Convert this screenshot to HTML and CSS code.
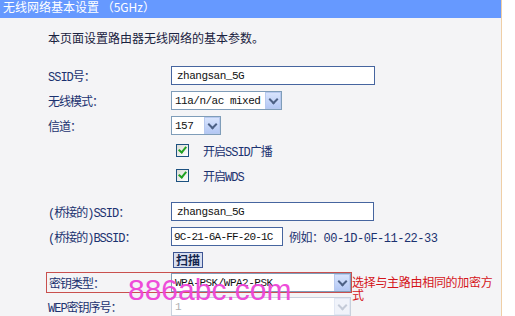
FILE: index.html
```html
<!DOCTYPE html>
<html lang="zh-CN">
<head>
  <meta charset="UTF-8">
  <title>无线网络基本设置</title>
  <link rel="stylesheet" href="styles.css">
</head>
<body>
  <div class="panel">
    <div class="title">无线网络基本设置 （5GHz）</div>
    <p class="intro">本页面设置路由器无线网络的基本参数。</p>

    <div class="form">
      <div class="row">
        <label>SSID号：</label>
        <input class="field wide" type="text" value="zhangsan_5G">
      </div>
      <div class="row">
        <label>无线模式：</label>
        <div class="select mode"><span>11a/n/ac mixed</span><i class="arrow"></i></div>
      </div>
      <div class="row">
        <label>信道：</label>
        <div class="select chan"><span>157</span><i class="arrow"></i></div>
      </div>
      <div class="row">
        <label></label>
        <span class="check"></span><span class="check-text">开启SSID广播</span>
      </div>
      <div class="row">
        <label></label>
        <span class="check"></span><span class="check-text">开启WDS</span>
      </div>

      <div class="row gap">
        <label>(桥接的)SSID：</label>
        <input class="field wide2" type="text" value="zhangsan_5G">
      </div>
      <div class="row">
        <label>(桥接的)BSSID：</label>
        <input class="field mac" type="text" value="9C-21-6A-FF-20-1C">
        <span class="hint">例如：00-1D-0F-11-22-33</span>
      </div>
      <div class="row short">
        <label></label>
        <button class="scan">扫描</button>
      </div>
      <div class="row key">
        <div class="mark">
          <label>密钥类型：</label>
          <div class="select long"><span>WPA-PSK/WPA2-PSK</span><i class="arrow"></i></div>
        </div>
        <div class="note">选择与主路由相同的加密方式</div>
      </div>
      <div class="row">
        <label>WEP密钥序号：</label>
        <div class="select long off"><span>1</span><i class="arrow"></i></div>
      </div>
    </div>

    <div class="watermark">886abc.com</div>
  </div>
</body>
</html>
```

FILE: styles.css
```css
* {
  margin: 0;
  padding: 0;
  box-sizing: border-box;
}
body {
  width: 515px;
  height: 316px;
  overflow: hidden;
  background: #fff;
  font-family: "Liberation Mono", "Noto Sans CJK SC", monospace;
  font-size: 12px;
}
.panel {
  position: relative;
  width: 502px;
  height: 316px;
  background: #f4f4f6;
  border-right: 1px solid #efcfa6;
}
.title {
  height: 18px;
  line-height: 14px;
  padding-left: 3px;
  background: #6699ff;
  color: #fff;
  font-family: "Noto Sans CJK SC", sans-serif;
  overflow: hidden;
}
.intro {
  margin: 12px 0 0 48px;
  line-height: 16px;
  color: #1a2240;
  font-family: "Noto Sans CJK SC", sans-serif;
}
.form {
  margin-top: 17px;
}
.row {
  display: flex;
  align-items: center;
  height: 25px;
  padding-left: 48px;
}
.row.gap {
  margin-top: 11px;
}
.row.short {
  height: 21px;
}
.row label {
  width: 123px;
  flex-shrink: 0;
  color: #1b3270;
  letter-spacing: -1px;
}
.field {
  height: 19px;
  padding: 0 5px;
  border: 1px solid #46659f;
  background: #fff;
  color: #111;
  font-family: "Liberation Mono", monospace;
  font-size: 11px;
  letter-spacing: -0.5px;
}
.wide { width: 204px; }
.wide2 { width: 203px; }
.mac {
  width: 112px;
  padding: 0 2px;
  letter-spacing: -0.8px;
}
.hint {
  margin-left: 6px;
  color: #1b3270;
  letter-spacing: -0.5px;
}
.select {
  display: flex;
  align-items: center;
  height: 19px;
  border: 1px solid #7f9db9;
  background: #fff;
  color: #111;
  font-size: 11px;
  letter-spacing: -0.5px;
}
.select span {
  flex: 1;
  padding-left: 3px;
  white-space: nowrap;
  overflow: hidden;
}
.arrow {
  position: relative;
  width: 16px;
  height: 17px;
  border: 1px solid #b7c9ef;
  background: linear-gradient(#d8e4fd, #b4c8f4);
}
.arrow::after {
  content: "";
  position: absolute;
  left: 4px;
  top: 3px;
  width: 5px;
  height: 5px;
  border-right: 2px solid #4d6185;
  border-bottom: 2px solid #4d6185;
  transform: rotate(45deg);
}
.mode { width: 111px; }
.chan { width: 50px; }
.long { width: 180px; }
.off {
  border-color: #c9d1dd;
  color: #b0b0b0;
}
.off .arrow {
  border-color: #e2e8f4;
  background: #f0f3fa;
}
.off .arrow::after {
  border-color: #c4cbd8;
}
.check {
  position: relative;
  width: 13px;
  height: 13px;
  margin-left: 5px;
  border: 1px solid #1c5180;
  background: linear-gradient(135deg, #dcdcd6, #fff);
}
.check::after {
  content: "";
  position: absolute;
  left: 3px;
  top: 0;
  width: 3px;
  height: 6px;
  border-right: 2px solid #21a121;
  border-bottom: 2px solid #21a121;
  transform: rotate(40deg);
}
.check-text {
  margin-left: 14px;
  color: #1b3270;
  letter-spacing: -1px;
}
.scan {
  margin-left: 2px;
  height: 16px;
  padding: 0 2px;
  border: 1px solid #3d5593;
  background: #d7deef;
  color: #14264f;
  font-family: "Noto Sans CJK SC", sans-serif;
  font-size: 12px;
  font-weight: bold;
  line-height: 14px;
}
.row.key {
  height: 24px;
  padding-left: 46px;
  align-items: flex-start;
}
.mark {
  display: flex;
  align-items: center;
  height: 21px;
  margin-top: 2px;
  padding-left: 2px;
  border: 1px solid #c9504e;
}
.mark label {
  width: 122px;
}
.note {
  width: 149px;
  margin-top: 5px;
  line-height: 13px;
  color: #d4141a;
  font-family: "Noto Sans CJK SC", sans-serif;
  letter-spacing: -0.3px;
}
.watermark {
  position: absolute;
  left: 128px;
  top: 275px;
  color: #ee44d8;
  font-family: "Liberation Sans", sans-serif;
  font-size: 30px;
  line-height: 1;
  opacity: 0.95;
}
```
